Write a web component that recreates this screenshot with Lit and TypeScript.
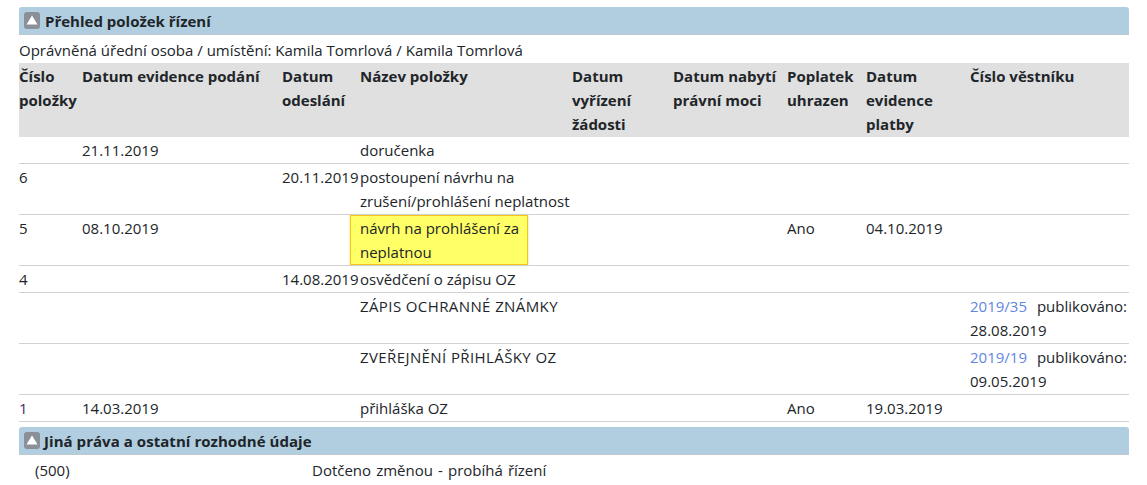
import { LitElement, html, css } from "lit";
import { customElement } from "lit/decorators.js";

const widths = [63, 200, 78, 212, 101, 114, 79, 104, 159];
const heads = [
  "Číslo položky", "Datum evidence podání", "Datum odeslání", "Název položky",
  "Datum vyřízení žádosti", "Datum nabytí právní moci", "Poplatek uhrazen",
  "Datum evidence platby", "Číslo věstníku",
];

type Row = { c: any[]; hl?: boolean };

@customElement("app-root")
export class AppRoot extends LitElement {
  static styles = css`
    :host { display: block; font-family: "Open Sans", sans-serif; font-size: 15px; line-height: 24px; color: #212529; background: #fff; height: 485px; overflow: hidden; }
    .wrap { padding: 7px 18px 0 19px; }
    .bar { display: flex; align-items: center; gap: 5px; height: 28px; box-sizing: border-box; padding-left: 5px; background: #b0cee0; border-bottom: 1px solid #bfc8cc; border-radius: 3px 3px 0 0; font-weight: 700; }
    .bar svg { display: block; flex: none; }
    .second { margin-top: 5px; }
    .second.bar { gap: 4px; }
    .second span { letter-spacing: .05px; }
    .who { height: 28px; line-height: 30px; }
    table { border-collapse: collapse; table-layout: fixed; width: 1110px; }
    th { background: #e0e0e0; font-weight: 700; text-align: left; vertical-align: top; padding: 1px 0; }
    td { padding: 1px 0; vertical-align: top; border-bottom: 1px solid #d2d2d2; }
    td.flush { padding: 0; }
    .hl { display: block; margin: 0 0 0 -10px; width: 178px; box-sizing: border-box; height: 50px; padding: 0 5px 0 9px; background: #ffff66; border: 1px solid #f5c518; box-shadow: 0 0 2px rgba(200,170,0,.5); }
    .caps { letter-spacing: .4px; }
    a { color: #5f86e3; text-decoration: none; }
    .pub { margin-left: 6px; }
    .first { color: #4a2a6a; }
    .other { display: flex; padding: 3px 0 0 16px; }
    .other .code { width: 277px; }
    .other .val { word-spacing: 1.2px; }
  `;

  private rows: Row[] = [
    { c: ["", "21.11.2019", "", "doručenka", "", "", "", "", ""] },
    { c: ["6", "", "20.11.2019", "postoupení návrhu na zrušení/prohlášení neplatnost", "", "", "", "", ""] },
    { c: ["5", "08.10.2019", "", "návrh na prohlášení za neplatnou", "", "", "Ano", "04.10.2019", ""], hl: true },
    { c: ["4", "", "14.08.2019", "osvědčení o zápisu OZ", "", "", "", "", ""] },
    { c: ["", "", "", html`<span class="caps">ZÁPIS OCHRANNÉ ZNÁMKY</span>`, "", "", "", "", html`<a>2019/35</a> <span class="pub">publikováno:</span> 28.08.2019`] },
    { c: ["", "", "", html`<span class="caps">ZVEŘEJNĚNÍ PŘIHLÁŠKY OZ</span>`, "", "", "", "", html`<a>2019/19</a> <span class="pub">publikováno:</span> 09.05.2019`] },
    { c: [html`<span class="first">1</span>`, "14.03.2019", "", "přihláška OZ", "", "", "Ano", "19.03.2019", ""] },
  ];

  private icon() {
    return html`<svg width="16" height="17" viewBox="0 0 16 17"><rect width="16" height="17" rx="3" fill="#8b8f98"/><path d="M8 3.5 13.5 12.5H2.5Z" fill="#fff"/></svg>`;
  }

  render() {
    return html`<div class="wrap">
      <div class="bar">${this.icon()}<span>Přehled položek řízení</span></div>
      <div class="who">Oprávněná úřední osoba / umístění: Kamila Tomrlová / Kamila Tomrlová</div>
      <table>
        <colgroup>${widths.map((w) => html`<col style="width:${w}px" />`)}</colgroup>
        <thead><tr>${heads.map((h) => html`<th>${h}</th>`)}</tr></thead>
        <tbody>
          ${this.rows.map((r) => html`<tr>${r.c.map((v, i) =>
            r.hl && i === 3
              ? html`<td class="flush"><span class="hl">${v}</span></td>`
              : html`<td>${v}</td>`)}</tr>`)}
        </tbody>
      </table>
      <div class="bar second">${this.icon()}<span>Jiná práva a ostatní rozhodné údaje</span></div>
      <div class="other"><div class="code">(500)</div><div class="val">Dotčeno změnou - probíhá řízení</div></div>
    </div>`;
  }
}
